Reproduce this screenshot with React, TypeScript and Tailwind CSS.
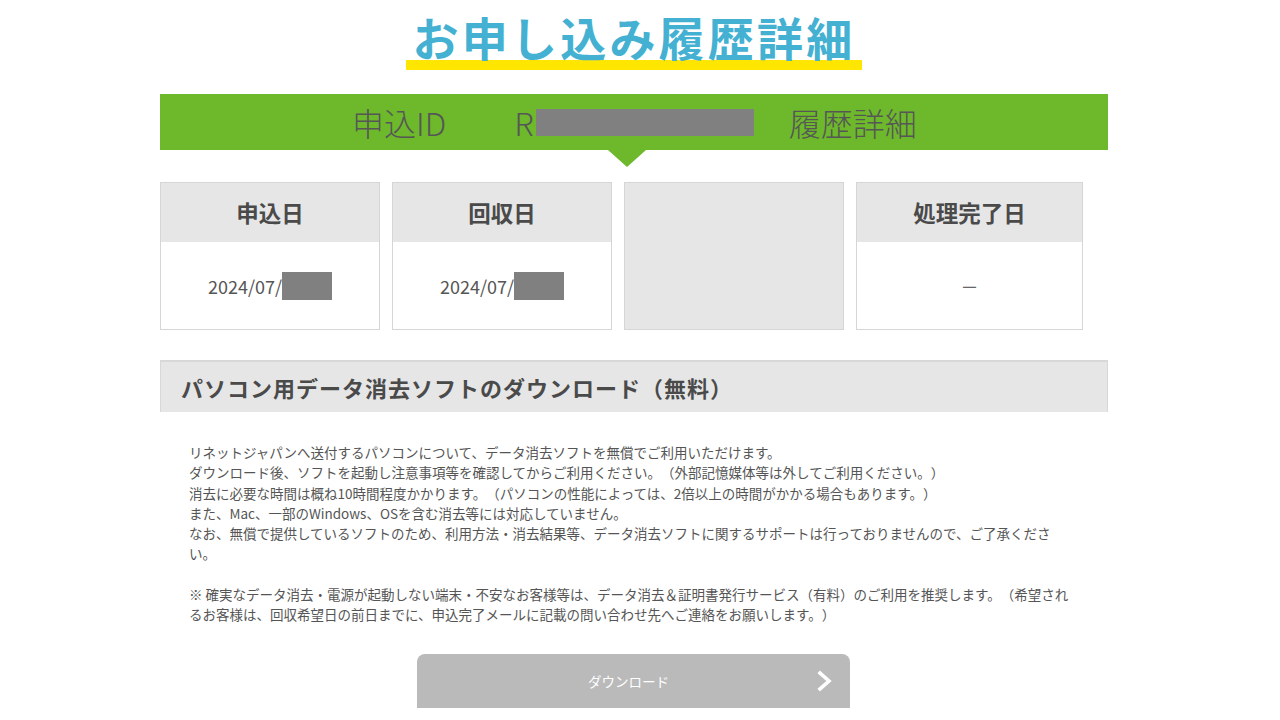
const font = { fontFamily: '"Noto Sans CJK JP", "Noto Sans", sans-serif' };

type Card = { label: string; date: string | null; empty?: boolean; width: string };

const cards: Card[] = [
  { label: "申込日", date: "2024/07/", width: "w-[220px]" },
  { label: "回収日", date: "2024/07/", width: "w-[220px]" },
  { label: "", date: null, empty: true, width: "w-[220px]" },
  { label: "処理完了日", date: null, width: "w-[227px]" },
];

export default function App() {
  return (
    <div className="min-h-[720px] bg-white text-[#555] [text-spacing-trim:space-all]" style={font}>
      <div className="ml-[160px] w-[948px]">
        {/* title */}
        <div className="flex justify-center pt-[10px]">
          <div className="flex flex-col items-stretch">
            <h1 className="relative z-10 px-[7px] text-[46px] font-bold leading-[52px] tracking-[3.2px] text-[#44b1d2]">
              お申し込み履歴詳細
            </h1>
            <div className="-mt-[2px] h-[10px] bg-[#ffe600]" />
          </div>
        </div>

        {/* id bar */}
        <div className="mt-[24px] flex h-[56px] items-center bg-[#6db92b] text-[32px] font-light text-[#565656]">
          <span className="ml-[192px]">申込ID</span>
          <span className="ml-[68px]">R</span>
          <span className="ml-[2px] h-[27px] w-[218px] bg-[#808080]" />
          <span className="ml-[35px]">履歴詳細</span>
        </div>
        <div className="ml-[448px] h-0 w-0 border-x-[19px] border-t-[17px] border-x-transparent border-t-[#6db92b]" />

        {/* cards */}
        <div className="mt-[15px] flex gap-[12px]">
          {cards.map((c, i) =>
            c.empty ? (
              <div key={i} className={`${c.width} h-[148px] border border-[#d6d6d6] bg-[#e6e6e6]`} />
            ) : (
              <div key={i} className={`${c.width} h-[148px] border border-[#d6d6d6] bg-white`}>
                <div className="flex h-[59px] items-center justify-center bg-[#e6e6e6] text-[22.5px] font-bold text-[#4a4a4a]">
                  {c.label}
                </div>
                <div className="flex h-[87px] items-center justify-center pt-[1px] text-[18px] text-[#555]">
                  {c.date ? (
                    <>
                      <span>{c.date}</span>
                      <span className="h-[28px] w-[50px] bg-[#808080]" />
                    </>
                  ) : (
                    <span className="text-[#666]">－</span>
                  )}
                </div>
              </div>
            )
          )}
        </div>

        {/* download section */}
        <div className="mt-[30px] flex h-[52px] items-center border-x border-t-2 border-[#d8d8d8] bg-[#e6e6e6] pl-[20px] text-[22px] font-bold tracking-[1px] text-[#4a4a4a]">
          パソコン用データ消去ソフトのダウンロード（無料）
        </div>

        <div className="ml-[29px] mt-[30px] w-[886px] text-[13.5px] leading-[20.3px] text-[#555]">
          <p>
            リネットジャパンへ送付するパソコンについて、データ消去ソフトを無償でご利用いただけます。
            <br />
            ダウンロード後、ソフトを起動し注意事項等を確認してからご利用ください。（外部記憶媒体等は外してご利用ください。）
            <br />
            消去に必要な時間は概ね10時間程度かかります。（パソコンの性能によっては、2倍以上の時間がかかる場合もあります。）
            <br />
            また、Mac、一部のWindows、OSを含む消去等には対応していません。
            <br />
            なお、無償で提供しているソフトのため、利用方法・消去結果等、データ消去ソフトに関するサポートは行っておりませんので、ご了承ください。
          </p>
          <br />
          <p>
            ※ 確実なデータ消去・電源が起動しない端末・不安なお客様等は、データ消去＆証明書発行サービス（有料）のご利用を推奨します。（希望されるお客様は、回収希望日の前日までに、申込完了メールに記載の問い合わせ先へご連絡をお願いします。）
          </p>
        </div>

        <div className="ml-[257px] mt-[29px] flex h-[54px] w-[433px] items-center rounded-t-[8px] bg-[#bababa] text-white">
          <span className="flex-1 pl-[24px] text-center text-[13.5px]">ダウンロード</span>
          <svg width="18" height="22" viewBox="0 0 18 22" className="mr-[16px]">
            <path d="M4 3 L13 11 L4 19" fill="none" stroke="white" strokeWidth="3.6" strokeLinecap="square" />
          </svg>
        </div>
      </div>
    </div>
  );
}
